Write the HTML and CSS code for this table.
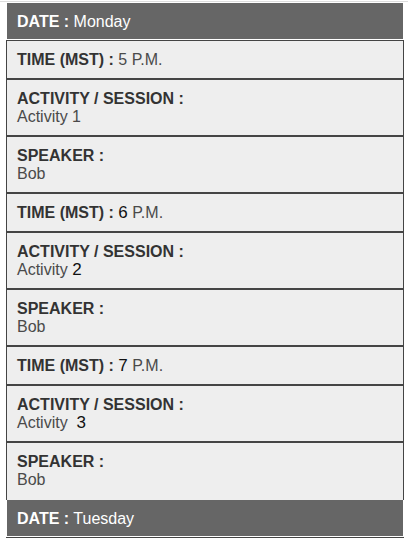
FILE: index.html
```html
<!DOCTYPE html>
<html>
<head>
<meta charset="utf-8">
<link rel="stylesheet" href="styles.css">
</head>
<body>
<div class="topline"></div>
<div class="schedule">
  <div class="day-header"><span class="hlabel">DATE :</span> Monday</div>
  <div class="list">
    <div class="row"><span class="label">TIME (MST) :</span> <span class="value">5 P.M.</span></div>
    <div class="row"><div class="label">ACTIVITY / SESSION :</div><div class="value">Activity 1</div></div>
    <div class="row"><div class="label">SPEAKER :</div><div class="value">Bob</div></div>
    <div class="row"><span class="label">TIME (MST) :</span> <span class="value"><span class="num">6</span> P.M.</span></div>
    <div class="row"><div class="label">ACTIVITY / SESSION :</div><div class="value">Activity <span class="num">2</span></div></div>
    <div class="row"><div class="label">SPEAKER :</div><div class="value">Bob</div></div>
    <div class="row"><span class="label">TIME (MST) :</span> <span class="value"><span class="num">7</span> P.M.</span></div>
    <div class="row"><div class="label">ACTIVITY / SESSION :</div><div class="value">Activity&nbsp; <span class="num">3</span></div></div>
    <div class="row"><div class="label">SPEAKER :</div><div class="value">Bob</div></div>
  </div>
  <div class="day-header"><span class="hlabel">DATE :</span> Tuesday</div>
  <div class="list list-next"></div>
</div>
</body>
</html>
```
FILE: styles.css
```css
html, body {
  margin: 0;
  padding: 0;
  background: #ffffff;
}
body {
  font-family: "Liberation Sans", Arial, Helvetica, sans-serif;
  font-size: 16px;
  color: #444;
}
.topline {
  margin-top: 1px;
  height: 1px;
  background: #dddddd;
}
.schedule {
  padding: 1px 4px 0 6px;
}
.day-header {
  margin: 0 1px;
  height: 36px;
  padding: 1px 10px 0;
  box-sizing: border-box;
  line-height: 36px;
  background: #666666;
  color: #ffffff;
  font-size: 16px;
}
.hlabel {
  font-weight: bold;
}
.list {
  margin-top: 1px;
  border-top: 1px solid #444;
  border-left: 1px solid #444;
  border-right: 1px solid #444;
  background: #eeeeee;
}
.list-next {
  height: 3px;
  background: #ffffff;
  border-left: none;
  border-right: none;
}
.row {
  padding: 10px 10px 9px;
  line-height: 18px;
  border-bottom: 2px solid #444;
}
.row:last-child {
  border-bottom: none;
  padding-bottom: 11px;
}
.label {
  font-weight: bold;
  color: #333;
}
.value {
  color: #4a4a4a;
}
.num {
  color: #111;
  font-size: 17px;
}
```
